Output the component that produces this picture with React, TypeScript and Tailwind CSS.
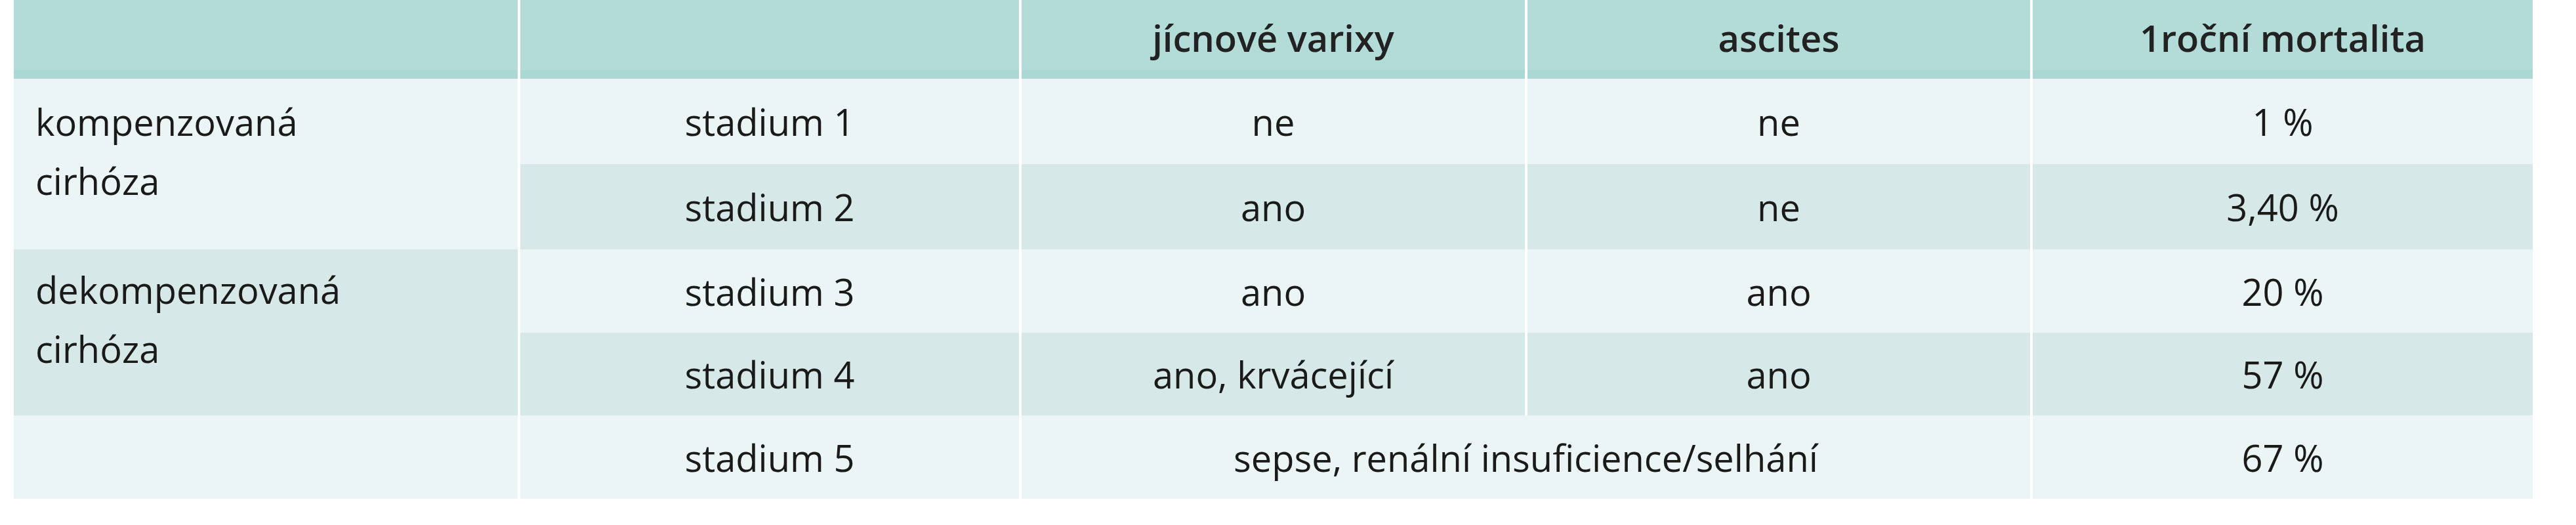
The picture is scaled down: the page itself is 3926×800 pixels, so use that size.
const header = ["", "", "jícnové varixy", "ascites", "1roční mortalita"];

const rows = [
  { stage: "stadium 1", varixy: "ne", ascites: "ne", mortality: "1 %", dark: false },
  { stage: "stadium 2", varixy: "ano", ascites: "ne", mortality: "3,40 %", dark: true },
  { stage: "stadium 3", varixy: "ano", ascites: "ano", mortality: "20 %", dark: false },
  { stage: "stadium 4", varixy: "ano, krvácející", ascites: "ano", mortality: "57 %", dark: true },
];

const App = () => {
  return (
    <div className="w-[3926px] h-[800px] bg-white pl-[21px] text-[56px] leading-[90px] text-[#1a1a18] font-['Open_Sans',sans-serif]">
      <div className="grid grid-cols-[768px_760px_767px_766px_762px] grid-rows-[120px_130px_130px_127px_126px_127px] gap-x-[4px]">
        {/* Header */}
        {header.map((h, i) => (
          <div
            key={i}
            className="bg-[#b3dcd9] shadow-[inset_0_-13px_0_#abd7d4] flex items-center justify-center font-semibold text-[#222] pb-[6px]"
          >
            {h}
          </div>
        ))}

        {/* Group labels spanning two rows */}
        <div className="row-start-2 row-span-2 col-start-1 bg-[#ebf5f5] pl-[33px] pt-[20px]">
          kompenzovaná
          <br />
          cirhóza
        </div>
        <div className="row-start-4 row-span-2 col-start-1 bg-[#d6e9e8] pl-[33px] pt-[16px]">
          dekompenzovaná
          <br />
          cirhóza
        </div>
        <div className="row-start-6 col-start-1 bg-[#ebf5f5]" />

        {rows.map((r, i) => {
          const bg = r.dark ? "bg-[#d6e9e8]" : "bg-[#ebf5f5]";
          return [r.stage, r.varixy, r.ascites, r.mortality].map((v, j) => (
            <div
              key={`${i}-${j}`}
              className={`${bg} flex items-center justify-center`}
              style={{ gridRowStart: i + 2, gridColumnStart: j + 2 }}
            >
              {v}
            </div>
          ));
        })}

        {/* Last row */}
        <div className="row-start-6 col-start-2 bg-[#ebf5f5] flex items-center justify-center">stadium 5</div>
        <div className="row-start-6 col-start-3 col-span-2 bg-[#ebf5f5] flex items-center justify-center">
          sepse, renální insuficience/selhání
        </div>
        <div className="row-start-6 col-start-5 bg-[#ebf5f5] flex items-center justify-center">67 %</div>
      </div>
    </div>
  );
};

export default App;
